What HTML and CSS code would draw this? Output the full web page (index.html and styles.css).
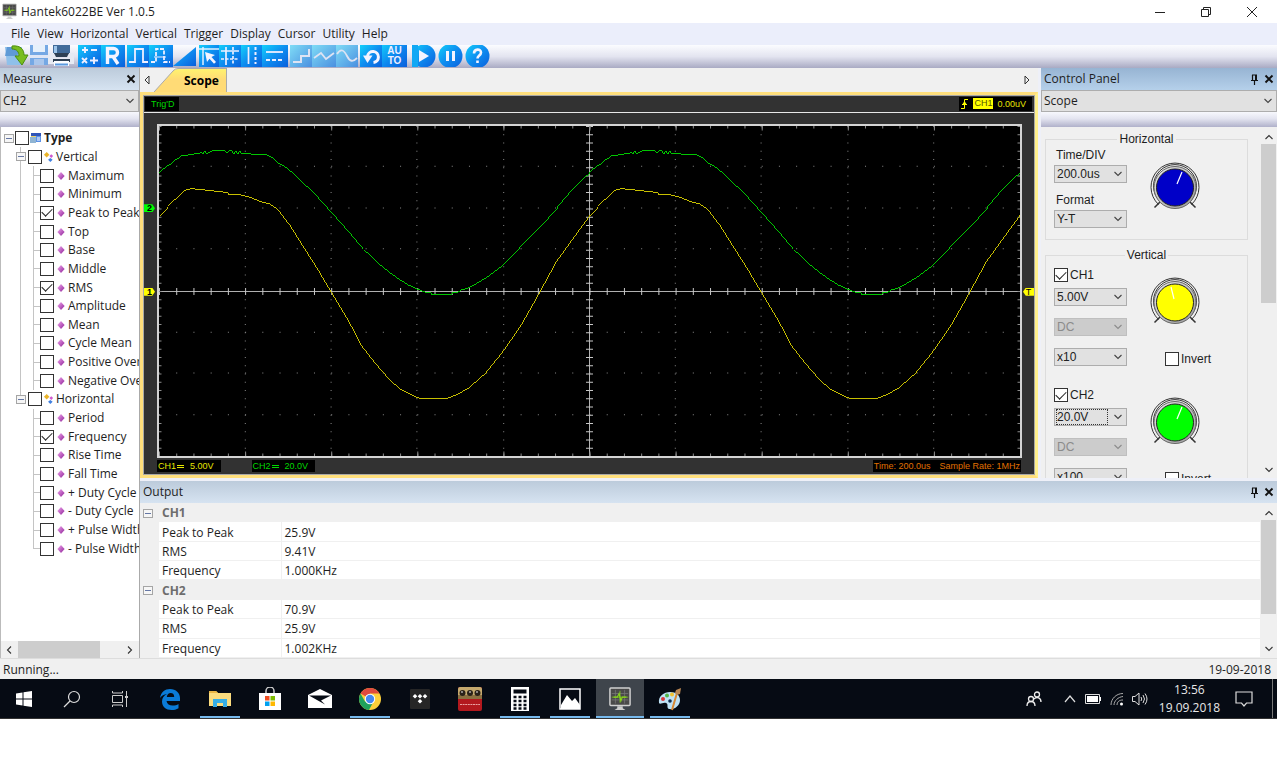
FILE: index.html
```html
<!DOCTYPE html>
<html lang="en">
<head>
<meta charset="utf-8">
<title>Hantek6022BE Ver 1.0.5</title>
<link rel="stylesheet" href="styles.css">
</head>
<body>
<svg class="defs" aria-hidden="true">
  <defs>
    <linearGradient id="blue" x1="0" y1="0" x2="1" y2="1"><stop offset="0" stop-color="#12d0fb"/><stop offset=".5" stop-color="#0e8df0"/><stop offset="1" stop-color="#0a5fdc"/></linearGradient>
    <linearGradient id="pale" x1="0" y1="0" x2="1" y2="1"><stop offset="0" stop-color="#7fdcf6"/><stop offset="1" stop-color="#4a8fe0"/></linearGradient>
    <linearGradient id="gem" x1="0" y1="0" x2="1" y2="1"><stop offset="0" stop-color="#f3a8f0"/><stop offset="1" stop-color="#8c1f96"/></linearGradient>
    <linearGradient id="ring" x1="0" y1="0" x2="1" y2="1"><stop offset="0" stop-color="#e8e8e8"/><stop offset="1" stop-color="#999"/></linearGradient>
    <symbol id="chev" viewBox="0 0 10 6"><path d="M1.500 1 5 4.500 8.500 1" fill="none" stroke="currentColor" stroke-width="1.100"/></symbol>
    <symbol id="dia" viewBox="0 0 8 8"><path d="M4 0 7.600 4 4 8 .4 4z" fill="url(#gem)"/></symbol>
    <symbol id="kids" viewBox="0 0 12 12"><path d="M4 .5 7 3.500 4 6.500 1 3.500z" fill="#e9b429"/><path d="M9 3l2 2-2 2-2-2z" fill="#d05ad0"/><path d="M8 7l2.500 2L8 11.500 5.500 9z" fill="#3f7fe0"/></symbol>
    <symbol id="pin" viewBox="0 0 9 11"><path d="M2 1h5M2.500 1v5M6 1v5M1 6.500h7M4.500 7v4" fill="none" stroke="#111" stroke-width="1.200"/><path d="M5 1h2v5H5z" fill="#111"/></symbol>
    <symbol id="cross" viewBox="0 0 10 10"><path d="M1.500 1.500 8.500 8.500M8.500 1.500 1.500 8.500" stroke="#111" stroke-width="1.900"/></symbol>
    <symbol id="scopeicon" viewBox="0 0 24 26"><rect x="1" y="1" width="22" height="19" rx="1" fill="#4a4a4a" stroke="#d0d0d0" stroke-width="1.600"/><path d="M3 7h18M3 14h18M7 3v15M17 3v15" stroke="#777" stroke-width=".8"/><path d="M3 11h18M12 4v13" stroke="#79b82a"/><path d="M5 11h4l2-4 2 8 1.500-4H19" fill="none" stroke="#88d819" stroke-width="1.200"/><path d="M9 21h6v2l3 2H6l3-2z" fill="#ccc"/></symbol>
    <symbol id="dial" viewBox="0 0 52 50"><g fill="none" stroke="#333"><path d="M9.500 42.500A24 24 0 1 1 42.500 42.500"/><path d="M10.500 39A21.500 21.500 0 1 1 41.500 39"/><path d="M5.500 45.500 11 40M46.500 45.500 41 40" stroke-width="1.500"/></g><circle cx="26" cy="25.500" r="21" fill="url(#ring)" stroke="#666"/><circle cx="26" cy="25.500" r="18.500" fill="currentColor" stroke="#222"/></symbol>
  </defs>
</svg>

<header class="titlebar">
  <svg class="appicon"><use href="#scopeicon"/></svg>
  <h1>Hantek6022BE Ver 1.0.5</h1>
  <div class="winbtns">
    <button aria-label="Minimize"><svg viewBox="0 0 12 12"><path d="M1 6.500h10" stroke="#222"/></svg></button>
    <button aria-label="Restore"><svg viewBox="0 0 12 12"><path d="M1.500 3.500h7v7h-7zM3.500 3.500v-2h7v7h-2" fill="none" stroke="#222"/></svg></button>
    <button aria-label="Close"><svg viewBox="0 0 12 12"><path d="M1 1 11 11M11 1 1 11" stroke="#222"/></svg></button>
  </div>
</header>

<nav class="menubar">
  <button>File</button><button>View</button><button>Horizontal</button><button>Vertical</button><button>Trigger</button><button>Display</button><button>Cursor</button><button>Utility</button><button>Help</button>
</nav>

<div class="toolbar" role="toolbar" aria-label="Tools">
  <div class="tools">
    <button aria-label="Open"><svg width="25" height="22"><path d="M0 2h17v18H2z" fill="#8fc0ea"/><path d="M2 2h14l-4 9H0z" fill="#5f9ad6"/><path d="M7 1c9-1 12 4 12 9h4l-6 10-7-9h4c0-4-2-7-7-7z" fill="#79bd1f" stroke="#4c8d10"/></svg></button>
    <button aria-label="Save"><svg width="18" height="22"><path d="M0 0h18v20H0z" fill="#75a8e4"/><path d="M3 0h12v7H3z" fill="#e6f0fb"/><path d="M0 10h18v3H0z" fill="#dfe6f5"/><path d="M4 14h10v6H4z" fill="#a9c6ec"/></svg></button>
    <button aria-label="Print"><svg width="28" height="22"><path d="M5 0h17v9H5z" fill="#416b9a"/><path d="M6 1h3v7H6z" fill="#9cc4ea"/><path d="M0 8h6l2 5h11l2-5h5v11H0z" fill="#e6eaf3"/><path d="M6 8h15l-2 4H8z" fill="#2e4054"/><path d="M5 14h17v3H5z" fill="#2e4054"/><path d="M6 16h15v5H6z" fill="#fafcff"/><path d="M7 19.500h13" stroke="#5b9be0" stroke-width="2"/></svg></button>
  </div>
  <div class="tools">
    <button aria-label="Math"><svg width="23" height="22"><rect width="23" height="22" fill="url(#blue)"/><path d="M4 5h6M7 2v6M13 5h6M4 13l5 5M9 13l-5 5M12 15.500h8M16 12v7" stroke="#eef" stroke-width="1.900"/></svg></button>
    <button aria-label="Reference"><svg width="24" height="22"><rect width="24" height="22" fill="url(#blue)"/><path d="M6.500 19V3.500h6a4 4 0 0 1 0 8h-6M12 11.500l5 7.500" fill="none" stroke="#f4f4ff" stroke-width="3.400"/></svg></button>
  </div>
  <div class="tools">
    <button aria-label="Single pulse"><svg width="22" height="22"><rect width="22" height="22" fill="url(#blue)"/><path d="M2 17h6V4h8v13h5" fill="none" stroke="#eef" stroke-width="1.800"/></svg></button>
    <button aria-label="Multi pulse"><svg width="24" height="22"><rect width="24" height="22" fill="url(#blue)"/><path d="M2 17h5V4h8v13h6" fill="none" stroke="#eef" stroke-width="1.800" stroke-dasharray="4 1.500"/><path d="M5 12h12" stroke="#eef"/></svg></button>
    <button aria-label="Ramp"><svg width="23" height="22"><path d="M0 21 23 2v19z" fill="url(#blue)"/></svg></button>
  </div>
  <div class="tools cursors">
    <button aria-label="Cursor"><svg width="20" height="22"><rect width="20" height="22" fill="url(#blue)"/><path d="M0 4h20M4 2v18" stroke="#dfefff" stroke-width="1.500"/><path d="M6 7l10 3-3.500 2 4.500 5-2 1.800-4.500-5L8 17z" fill="#f4f4ff"/></svg></button>
    <button aria-label="Cross cursor"><svg width="22" height="22"><rect width="22" height="22" fill="url(#blue)"/><path d="M7 2v18M2 6h18" stroke="#eef" stroke-width="1.700"/><path d="M14 2v18M2 14h18" stroke="#eef" stroke-width="1.700" stroke-dasharray="3 1.500"/></svg></button>
    <button aria-label="Vertical cursor"><svg width="21" height="22"><rect width="21" height="22" fill="url(#blue)"/><path d="M7.500 2v17" stroke="#eef" stroke-width="1.700"/><path d="M14.500 2v17" stroke="#eef" stroke-width="2" stroke-dasharray="3 2"/></svg></button>
    <button aria-label="Horizontal cursor"><svg width="26" height="22"><rect width="26" height="22" fill="url(#blue)"/><path d="M4 7h17" stroke="#eef" stroke-width="1.800"/><path d="M4 15h17" stroke="#eef" stroke-width="2" stroke-dasharray="4 2"/></svg></button>
  </div>
  <div class="tools">
    <button aria-label="Step"><svg width="22" height="22"><rect width="22" height="22" fill="url(#pale)"/><path d="M3 17h8v-6h8V4" fill="none" stroke="#dde3f3" stroke-width="2"/></svg></button>
    <button aria-label="Linear"><svg width="24" height="22"><rect width="24" height="22" fill="url(#pale)"/><path d="M2 13l7-5 5 6 8-6" fill="none" stroke="#dde3f3" stroke-width="1.800"/></svg></button>
    <button aria-label="Sine"><svg width="22" height="22"><rect width="22" height="22" fill="url(#pale)"/><path d="M1 9c4-6 7-4 10 2s6 6 10 2" fill="none" stroke="#dde3f3" stroke-width="1.800"/></svg></button>
  </div>
  <div class="tools">
    <button aria-label="Reset"><svg width="22" height="22"><rect width="22" height="22" fill="url(#blue)"/><path d="M7.500 11a5.500 5.500 0 1 1 6 6.500" fill="none" stroke="#f4f4ff" stroke-width="3"/><path d="M3 10.500h9.500L7.500 18z" fill="#f4f4ff"/></svg></button>
    <button class="auto"><span>AU</span><span>TO</span></button>
  </div>
  <div class="tools round">
    <button aria-label="Run"><svg width="25" height="22"><circle cx="13" cy="11" r="11.500" fill="url(#blue)"/><path d="M1 0h6v22H1z" fill="#10a8f5"/><path d="M8 5l10 6-10 6z" fill="#f4f4ff"/></svg></button>
    <button aria-label="Pause"><svg width="25" height="22"><circle cx="12.500" cy="11" r="12" fill="url(#blue)"/><path d="M9.500 6v10M15.500 6v10" stroke="#f4f4ff" stroke-width="3"/></svg></button>
    <button aria-label="Help"><svg width="25" height="22"><circle cx="12.500" cy="11" r="12" fill="url(#blue)"/><path d="M9 8.500c0-5 7-5 7-1 0 3-3.500 3-3.500 6M12.500 15.500V18" fill="none" stroke="#f4f4ff" stroke-width="2.600"/></svg></button>
  </div>
</div>

<main class="workspace">
  <aside class="measure">
    <div class="panehead"><h2>Measure</h2><button aria-label="Close"><svg width="10" height="10"><use href="#cross"/></svg></button></div>
    <label class="combo wide"><select aria-label="Channel"><option>CH2</option></select><svg width="10" height="6"><use href="#chev"/></svg></label>
    <div class="shade"></div>
    <div class="treebox">
      <div class="tree">
        <label class="root"><i class="exp"></i><input type="checkbox"><svg width="12" height="12"><path d="M1 2h10v8H1z" fill="#ecd36a"/><path d="M1 1h10v3H1z" fill="#2f55b8"/><path d="M6 4h5v6H6z" fill="#5d92e6"/><path d="M0 5h6v6H0z" fill="#8fb4d3"/><path d="M7 6h3M7 8h3" stroke="#fff"/></svg>Type</label>
        <label class="branch"><i class="exp"></i><input type="checkbox"><svg width="11" height="12"><use href="#kids"/></svg>Vertical</label>
        <label class="leaf"><input type="checkbox"><svg width="8" height="8"><use href="#dia"/></svg>Maximum</label>
        <label class="leaf"><input type="checkbox"><svg width="8" height="8"><use href="#dia"/></svg>Minimum</label>
        <label class="leaf"><input type="checkbox" checked><svg width="8" height="8"><use href="#dia"/></svg>Peak to Peak</label>
        <label class="leaf"><input type="checkbox"><svg width="8" height="8"><use href="#dia"/></svg>Top</label>
        <label class="leaf"><input type="checkbox"><svg width="8" height="8"><use href="#dia"/></svg>Base</label>
        <label class="leaf"><input type="checkbox"><svg width="8" height="8"><use href="#dia"/></svg>Middle</label>
        <label class="leaf"><input type="checkbox" checked><svg width="8" height="8"><use href="#dia"/></svg>RMS</label>
        <label class="leaf"><input type="checkbox"><svg width="8" height="8"><use href="#dia"/></svg>Amplitude</label>
        <label class="leaf"><input type="checkbox"><svg width="8" height="8"><use href="#dia"/></svg>Mean</label>
        <label class="leaf"><input type="checkbox"><svg width="8" height="8"><use href="#dia"/></svg>Cycle Mean</label>
        <label class="leaf"><input type="checkbox"><svg width="8" height="8"><use href="#dia"/></svg>Positive Overshoot</label>
        <label class="leaf"><input type="checkbox"><svg width="8" height="8"><use href="#dia"/></svg>Negative Overshoot</label>
        <label class="branch"><i class="exp"></i><input type="checkbox"><svg width="11" height="12"><use href="#kids"/></svg>Horizontal</label>
        <label class="leaf last"><input type="checkbox"><svg width="8" height="8"><use href="#dia"/></svg>Period</label>
        <label class="leaf last"><input type="checkbox" checked><svg width="8" height="8"><use href="#dia"/></svg>Frequency</label>
        <label class="leaf last"><input type="checkbox"><svg width="8" height="8"><use href="#dia"/></svg>Rise Time</label>
        <label class="leaf last"><input type="checkbox"><svg width="8" height="8"><use href="#dia"/></svg>Fall Time</label>
        <label class="leaf last"><input type="checkbox"><svg width="8" height="8"><use href="#dia"/></svg>+ Duty Cycle</label>
        <label class="leaf last"><input type="checkbox"><svg width="8" height="8"><use href="#dia"/></svg>- Duty Cycle</label>
        <label class="leaf last"><input type="checkbox"><svg width="8" height="8"><use href="#dia"/></svg>+ Pulse Width</label>
        <label class="leaf last"><input type="checkbox"><svg width="8" height="8"><use href="#dia"/></svg>- Pulse Width</label>
      </div>
      <div class="hbar"><svg class="prev" width="10" height="6"><use href="#chev"/></svg><span></span><svg class="fwd" width="10" height="6"><use href="#chev"/></svg></div>
    </div>
  </aside>

  <div class="content">
    <div class="upper">
      <section class="scope">
        <div class="tabs">
          <button class="arrow" aria-label="Previous tab"><svg width="6" height="10"><path d="M5 1v8L1 5z" fill="none" stroke="#333"/></svg></button>
          <button class="tab"><svg width="30" height="24"><defs><linearGradient id="tabfill" x2="0" y2="1"><stop offset="0" stop-color="#fff36e"/><stop offset=".45" stop-color="#ffdb76"/></linearGradient></defs><path d="M0 24 19 3Q21 1 24 1h6v23z" fill="url(#tabfill)"/><path d="M0 24 19 3Q21 .5 24 .5h6" fill="none" stroke="#aaa"/></svg><span>Scope</span></button>
          <button class="arrow next" aria-label="Next tab"><svg width="6" height="10"><path d="M1 1v8l4-4z" fill="none" stroke="#333"/></svg></button>
        </div>
        <div class="screen">
          <div class="status">
            <span class="tag green trig">Trig'D</span>
            <span class="tag yellow level"><svg width="8" height="12"><path d="M0 10.500h3.500v-9H7M1 6.500h5" fill="none" stroke="#ffff00"/><path d="M3.500 3 6 7H1z" fill="#ff0"/></svg><b>CH1</b> 0.00uV</span>
          </div>
          <div class="stage">
            <div class="marks"><span class="mark two">2</span><span class="mark one">1</span></div>
            <div class="plot">
              <svg viewBox="158 126 863 332" preserveAspectRatio="none" aria-label="Waveforms">
                <defs>
                  <path id="gridv" d="M244.500 126V458M330.500 126V458M416.500 126V458M503.500 126V458M675.500 126V458M761.500 126V458M848.500 126V458M934.500 126V458"/>
                  <path id="gridh" d="M158 166.500H1021M158 208.500H1021M158 249.500H1021M158 333.500H1021M158 374.500H1021M158 416.500H1021"/>
                  <path id="green" d="M158 173L165 167 169 165 174 160 178 158 180 156H187V155H192L193 154H198L200 152 202 154 204 151 206 154 209 152 211 151H224L226 153 228 151H231L233 154 235 151 237 154 239 151 241 154H249L255 155H266L272 158 277 163 283 166 292 173 300 181 313 193 330 212 347 231 363 250 380 266 390 274 400 281 408 286 417 290 422 292 427 294H431V295.500H452V293.500H457L461 291 468 289 477 284 487 278 503 266 512 257 520 248 530 238 540 227 557 208 573 189 590 173"/>
                  <path id="yellow" d="M158 217L167 207 172 202 177 197 183 191 190 189 200 190 210 191 227 193 228 195H238L247 197 255 200 262 203 268 204 273 207 277 210 290 227 303 248 317 270 330 292 348 322 361 347 371 360 381 372 390 382 400 391 410 396 420 400.500H446L457 396 468 390 485 375 502 354 520 328 536 300 556 263 571 242 590 216"/>
                </defs>
                <g stroke="#8c8c8c" fill="none">
                  <use href="#gridv" stroke-dasharray="1 7.300"/>
                  <use href="#gridh" stroke-dasharray="1 16.260"/>
                  <path d="M589.500 126V458M158 292.500H1021" stroke="#b4b4b4"/>
                  <path d="M158 292.500H1021" stroke-width="7" stroke-dasharray="1 16.260" stroke="#c8c8c8"/>
                  <path d="M589.500 126V458" stroke-width="7" stroke-dasharray="1 7.300" stroke="#c8c8c8"/>
                  <path d="M158 127H1021M158 457H1021" stroke-width="3" stroke-dasharray="1 16.260"/>
                  <path d="M158.500 126V458M1020.500 126V458" stroke-width="4" stroke-dasharray="1 7.300"/>
                  <path d="M158 128H1021M158 456H1021" stroke-width="5" stroke-dasharray="1 85.300"/>
                </g>
                <g fill="none" stroke-width="1" shape-rendering="crispEdges">
                  <g stroke="#00c800"><use href="#green"/><use href="#green" x="431"/></g>
                  <g stroke="#c8c000"><use href="#yellow"/><use href="#yellow" x="431"/></g>
                </g>
              </svg>
            </div>
            <div class="marks"><span class="mark trg">T</span></div>
          </div>
          <div class="status foot">
            <span class="tag yellow">CH1<i></i>5.00V</span>
            <span class="tag green second">CH2<i></i>20.0V</span>
            <span class="tag orange">Time: 200.0us<em>Sample Rate: 1MHz</em></span>
          </div>
        </div>
      </section>

      <section class="control">
        <div class="panehead active"><h2>Control Panel</h2><button aria-label="Pin"><svg width="9" height="11"><use href="#pin"/></svg></button><button aria-label="Close"><svg width="10" height="10"><use href="#cross"/></svg></button></div>
        <label class="combo wide"><select aria-label="Panel"><option>Scope</option></select><svg width="10" height="6"><use href="#chev"/></svg></label>
        <div class="shade"></div>
        <div class="scrollarea">
          <div class="groups">
            <fieldset>
              <legend>Horizontal</legend>
              <div class="horiz">
                <div>
                  <label for="tdiv">Time/DIV</label>
                  <span class="combo"><select id="tdiv"><option>200.0us</option></select><svg width="10" height="6"><use href="#chev"/></svg></span>
                  <label for="fmt">Format</label>
                  <span class="combo"><select id="fmt"><option>Y-T</option></select><svg width="10" height="6"><use href="#chev"/></svg></span>
                </div>
                <svg class="dial" color="#0000c8" viewBox="0 0 52 50"><use href="#dial"/><path d="M28 22 33 10" stroke="#fff" stroke-width="1.200"/></svg>
              </div>
            </fieldset>
            <fieldset class="vert">
              <legend>Vertical</legend>
              <div class="channel">
                <div>
                  <label class="tick"><input type="checkbox" checked>CH1</label>
                  <span class="combo"><select aria-label="CH1 volts"><option>5.00V</option></select><svg width="10" height="6"><use href="#chev"/></svg></span>
                  <span class="combo off"><select aria-label="CH1 coupling" disabled><option>DC</option></select><svg width="10" height="6"><use href="#chev"/></svg></span>
                  <span class="combo"><select aria-label="CH1 probe"><option>x10</option></select><svg width="10" height="6"><use href="#chev"/></svg></span>
                </div>
                <div class="side"><svg class="dial" color="#ffff00" viewBox="0 0 52 50"><use href="#dial"/><path d="M25 22 22 10" stroke="#fff" stroke-width="1.200"/></svg><label class="tick"><input type="checkbox">Invert</label></div>
              </div>
              <div class="channel">
                <div>
                  <label class="tick"><input type="checkbox" checked>CH2</label>
                  <span class="combo focus"><select aria-label="CH2 volts"><option>20.0V</option></select><svg width="10" height="6"><use href="#chev"/></svg></span>
                  <span class="combo off"><select aria-label="CH2 coupling" disabled><option>DC</option></select><svg width="10" height="6"><use href="#chev"/></svg></span>
                  <span class="combo"><select aria-label="CH2 probe"><option>x100</option></select><svg width="10" height="6"><use href="#chev"/></svg></span>
                </div>
                <div class="side"><svg class="dial" color="#00ff00" viewBox="0 0 52 50"><use href="#dial"/><path d="M28 22 33 10" stroke="#fff" stroke-width="1.200"/></svg><label class="tick"><input type="checkbox">Invert</label></div>
              </div>
            </fieldset>
          </div>
          <div class="vbar"><svg class="up" width="10" height="6"><use href="#chev"/></svg><span></span><svg width="10" height="6"><use href="#chev"/></svg></div>
        </div>
      </section>
    </div>

    <section class="output">
      <div class="panehead"><h2>Output</h2><button aria-label="Pin"><svg width="9" height="11"><use href="#pin"/></svg></button><button aria-label="Close"><svg width="10" height="10"><use href="#cross"/></svg></button></div>
      <div class="results">
        <table>
          <tbody>
            <tr class="group"><td class="gutter"><i class="exp"></i></td><th colspan="2">CH1</th></tr>
            <tr><td class="gutter"></td><td>Peak to Peak</td><td>25.9V</td></tr>
            <tr><td class="gutter"></td><td>RMS</td><td>9.41V</td></tr>
            <tr><td class="gutter"></td><td>Frequency</td><td>1.000KHz</td></tr>
            <tr class="group"><td class="gutter"><i class="exp"></i></td><th colspan="2">CH2</th></tr>
            <tr><td class="gutter"></td><td>Peak to Peak</td><td>70.9V</td></tr>
            <tr><td class="gutter"></td><td>RMS</td><td>25.9V</td></tr>
            <tr><td class="gutter"></td><td>Frequency</td><td>1.002KHz</td></tr>
          </tbody>
        </table>
        <div class="vbar short"><svg class="up" width="10" height="6"><use href="#chev"/></svg><span></span><svg width="10" height="6"><use href="#chev"/></svg></div>
      </div>
    </section>
  </div>
</main>

<div class="statusbar"><span>Running...</span><span>19-09-2018</span></div>

<footer class="taskbar">
  <div class="system">
    <button aria-label="Start"><svg width="18" height="18"><path d="M1 3.500 7.500 2.500V8.500H1zM8.500 2.300 17 1v7.500H8.500zM1 9.500H7.500v6L1 14.500zM8.500 9.500H17V17l-8.500-1.300z" fill="#fff"/></svg></button>
    <button aria-label="Search"><svg width="18" height="18"><circle cx="11" cy="7" r="5.500" fill="none" stroke="#ddd" stroke-width="1.200"/><path d="M7 11 1 17" stroke="#ddd" stroke-width="1.200"/></svg></button>
    <button aria-label="Task view"><svg width="18" height="18"><path d="M1.500 5.500h10v7h-10zM1.500 1v2h10V1M1.500 17v-2h10v2M15.500 1v16" fill="none" stroke="#ccc"/><path d="M14 6h3v2h-3z" fill="#ccc"/></svg></button>
  </div>
  <div class="apps">
    <button aria-label="Edge"><svg width="22" height="22" viewBox="0 0 22 22"><path d="M1 10C2 4 6 1 11 1c6 0 10 4 10 9v3H7.500c.5 3 3 4.500 6 4.500 2.500 0 4.500-.6 6-1.600v4.300C17.500 21.500 15 22 12.500 22 7 22 3 18.500 3 13.500 3 10 5 7.500 8 6 5 6.300 2.500 8 1 10zm6.800-1h7.400c0-2.500-1.200-4-3.600-4-2 0-3.400 1.600-3.800 4z" fill="#0a7bd8"/></svg></button>
    <button class="open" aria-label="File Explorer"><svg width="24" height="22"><path d="M1 3h7l2 2h13v13H1z" fill="#fbdc7e"/><path d="M1 3h7l2 2H1z" fill="#e9b544"/><path d="M5 11h14v8h-4v-4H9v4H5z" fill="#36aee6"/></svg></button>
    <button aria-label="Store"><svg width="24" height="24"><path d="M8 7V4a4 4 0 0 1 8 0v3" fill="none" stroke="#ccc" stroke-width="1.500"/><path d="M1 6h22v17H1z" fill="#fff"/><path d="M7 9h4.500v4.500H7z" fill="#f04d22"/><path d="M12.500 9H17v4.500h-4.500z" fill="#7dba00"/><path d="M7 14.500h4.500V19H7z" fill="#00a0f0"/><path d="M12.500 14.500H17V19h-4.500z" fill="#ffb800"/></svg></button>
    <button aria-label="Mail"><svg width="24" height="22"><path d="M0 7 12 1l12 6v13H0z" fill="#fff"/><path d="M1 7.500h22L13 12.500l4 4z" fill="#060b14"/></svg></button>
    <button class="open" aria-label="Chrome"><svg width="22" height="22" viewBox="0 0 22 22"><circle cx="11" cy="11" r="11" fill="#fdd03b"/><path d="M11 11 1.500 5.500A11 11 0 0 1 20.500 5.500H11z" fill="#e04a3f"/><path d="M1.500 5.500A11 11 0 0 0 10 22l4.500-8.500H6z" fill="#1fa15d"/><circle cx="11" cy="11" r="5.200" fill="#fff"/><circle cx="11" cy="11" r="4.200" fill="#4688f1"/></svg></button>
    <button aria-label="Tidal"><svg width="20" height="20"><rect width="20" height="20" rx="1" fill="#262626"/><path d="M5 5l2.300 2.300L5 9.600 2.700 7.300zM10 5l2.300 2.300L10 9.600 7.700 7.300zM15 5l2.300 2.300L15 9.600l-2.300-2.300zM10 10l2.300 2.300L10 14.600l-2.300-2.300z" fill="#fff"/></svg></button>
    <button aria-label="Amp modeller"><svg width="24" height="24"><rect width="24" height="24" rx="2" fill="#b3191e"/><path d="M0 2q0-2 2-2h20q2 0 2 2v9H0z" fill="#c4a96e"/><path d="M0 8h24v4H0z" fill="#8b7041"/><g fill="#2a2118"><circle cx="4.500" cy="6" r="3"/><circle cx="12" cy="6" r="3"/><circle cx="19.500" cy="6" r="3"/></g><path d="M2 17.500h20" stroke="#e9a0a0" stroke-dasharray="2 .6"/><path d="M3 5h2M11 5h2M18 5h2" stroke="#eee"/></svg></button>
    <button class="open" aria-label="Calculator"><svg width="18" height="24"><path d="M0 0h18v24H0z" fill="#fff"/><path d="M2.500 2.500h13v4h-13z" fill="#060b14"/><path d="M2.500 10h13M2.500 14h13M2.500 18h13M2.500 21.500h13" stroke="#060b14" stroke-width="2.300" stroke-dasharray="3 2"/></svg></button>
    <button class="open" aria-label="Photos"><svg width="22" height="22"><path d="M1 1h20v20H1z" fill="#060b14" stroke="#fff" stroke-width="1.500"/><path d="M2 17 8 7l5 6 3-3 5 7v4H2z" fill="#fff"/></svg></button>
    <button class="open current" aria-label="Hantek6022BE"><svg width="22" height="24"><use href="#scopeicon"/></svg></button>
    <button class="open" aria-label="Paint"><svg width="24" height="24"><path d="M1 16C0 9 6 5 12 5c6 0 10 3 10 8 0 6-6 10-11 9-3-1 0-5-3-6-3-1-6 2-7 0z" fill="#bfe2f5"/><circle cx="5" cy="12" r="2" fill="#d9383a"/><circle cx="9" cy="8.500" r="2" fill="#53b648"/><circle cx="14" cy="7.500" r="2" fill="#f2c230"/><circle cx="12" cy="14" r="1.800" fill="#0b2b50"/><path d="M14 23 19 6" stroke="#d98a35" stroke-width="2"/><path d="M17 6l1-3 5-2-1 6-3 1z" fill="#b98652"/></svg></button>
  </div>
  <div class="tray">
    <svg width="16" height="16"><g fill="none" stroke="#eee" stroke-width="1.300"><circle cx="11" cy="3.500" r="2.500"/><circle cx="5" cy="8" r="2.500"/><path d="M1 15c0-6 8-6 8 0M8 8c3-3 7-1 7 3"/></g></svg>
    <svg width="12" height="12"><path d="M1 9 6 3l5 6" fill="none" stroke="#ddd" stroke-width="1.200"/></svg>
    <svg width="16" height="12"><path d="M.5 1.500h14v9H.5z" fill="none" stroke="#ddd"/><path d="M2 3h11v6H2zM15 4h1v4h-1z" fill="#fff"/></svg>
    <svg width="13" height="14"><g fill="none" stroke="#aaa"><path d="M1 13C1 7 6 1.500 13 1.500M4 13c0-4 4-8 9-8.500M7 13c0-3 2-5 6-5"/></g><circle cx="11.500" cy="12" r="1.500" fill="#fff"/></svg>
    <svg width="16" height="14"><g fill="none" stroke="#ddd"><path d="M.5 4.500H3L7 1v12L3 9.500H.5zM9 5q1.500 2 0 4M11 3q3 4 0 8M13 1.500q4 5.500 0 11"/></g></svg>
    <div class="clock"><span>13:56</span><span>19.09.2018</span></div>
    <svg width="18" height="18"><path d="M1 2h16v11h-5.500L9 16 6.500 13H1z" fill="none" stroke="#ddd" stroke-width="1.200"/></svg>
    <i class="desk"></i>
  </div>
</footer>
</body>
</html>
```

FILE: styles.css
```css
* { box-sizing: border-box; }

body {
  margin: 0;
  height: 100vh;
  padding-bottom: 49px;
  display: flex;
  flex-direction: column;
  background: #fff;
  color: #1e1e1e;
  font: 12px/16px "Open Sans", "Noto Sans", sans-serif;
}

button, select, input { font: inherit; color: inherit; }
button { border: 0; padding: 0; background: none; }
svg { display: block; flex: none; }
h1, h2 { margin: 0; font: inherit; }
.defs { position: absolute; width: 0; height: 0; }

/* Title, menu and tool bars */
.titlebar { display: flex; align-items: center; height: 23px; padding-left: 2px; }
.appicon { width: 15px; height: 17px; }
.titlebar h1 { flex: 1; padding-left: 4px; }
.winbtns { display: flex; padding-right: 2px; }
.winbtns button { width: 46px; display: flex; justify-content: center; }
.winbtns svg { width: 12px; height: 12px; }

.menubar { display: flex; gap: 7px; height: 22px; padding-left: 11px; background: #ebeefb; }

.toolbar {
  display: flex;
  gap: 2px;
  height: 23px;
  padding-left: 5px;
  background: linear-gradient(#fbfcff, #e3e4f0 50%, #a9aac3);
}
.tools { display: flex; align-items: flex-start; }
.cursors { padding-left: 1px; }
.round { gap: 2px; padding-left: 2px; }
.auto {
  display: flex;
  flex-direction: column;
  justify-content: center;
  width: 25px;
  height: 22px;
  background: linear-gradient(135deg, #12c8fb, #0e85ee 50%, #0a5fdc);
  color: #eef;
  font: bold 10px/10px "Liberation Sans", Arial, sans-serif;
}
.auto span { display: block; height: 10px; overflow: hidden; }

/* Panels */
.workspace { flex: 1; min-height: 0; display: flex; background: #eef0f8; }
.measure { width: 140px; display: flex; flex-direction: column; border-right: 1px solid #aaa; background: #fff; }
.content { flex: 1; min-width: 0; display: flex; flex-direction: column; gap: 3px; }
.panehead {
  flex: none;
  display: flex;
  align-items: center;
  gap: 5px;
  height: 22px;
  padding: 0 3px;
  background: linear-gradient(#bccbdb, #d6e3f1);
}
.panehead h2 { flex: 1; }
.panehead.active { background: linear-gradient(#97b4d3, #b5d0ea); }
.shade { flex: none; height: 15px; background: linear-gradient(#f7f8fd, #e3e4f0 45%, #b0b1ca); }

.combo { display: grid; align-items: center; width: 73px; height: 18px; font: 12px/16px "Liberation Sans", Arial, sans-serif; color: #222; }
.combo > *, .combo::after { grid-area: 1 / 1; }
.combo > svg { justify-self: end; margin-right: 4px; color: #444; pointer-events: none; }
.combo select {
  appearance: none;
  width: 100%;
  height: 100%;
  padding: 0 2px;
  border: 1px solid #adadad;
  border-radius: 0;
  background: #e1e1e1;
  opacity: 1;
}
.combo.off, .combo.off > svg { color: #8b8b8b; }
.combo.off select { background: #ccc; border-color: #bfbfbf; }
.combo.focus::after { content: ""; height: 14px; margin: 0 19px 0 2px; border: 1px dotted #333; pointer-events: none; }
.combo.wide { flex: none; width: 100%; height: 22px; font: inherit; color: inherit; }

input[type="checkbox"] {
  appearance: none;
  flex: none;
  width: 14px;
  height: 14px;
  margin: 0;
  border: 1px solid #333;
  background: #fff;
  display: grid;
  place-items: center;
}
input[type="checkbox"]:checked::after {
  content: "";
  width: 9px;
  height: 5px;
  margin-bottom: 3px;
  border: solid #222;
  border-width: 0 0 1px 1px;
  transform: rotate(-45deg);
}

/* Measurement tree */
.treebox { flex: 1; min-height: 0; display: flex; flex-direction: column; justify-content: space-between; border-left: 1px solid #bbb; overflow: hidden; }
.tree {
  display: grid;
  grid-auto-rows: 1fr;
  height: 429px;
  margin-top: 2px;
  padding-left: 3px;
  overflow: hidden;
  background: linear-gradient(#c4c4c4, #c4c4c4) 19px 18px / 1px 252px no-repeat;
}
.tree label { display: flex; align-items: center; white-space: nowrap; }
.root { gap: 1px; font-weight: bold; }
.root svg { margin-right: 1px; }
.branch { padding-left: 12px; }
.branch .exp { margin-right: 2px; }
.branch svg { margin: 0 2px 0 1px; }
.leaf { padding-left: 29px; }
.leaf::before {
  content: "";
  width: 7px;
  align-self: stretch;
  background:
    linear-gradient(#c4c4c4, #c4c4c4) 0 50% / 7px 1px no-repeat,
    linear-gradient(#c4c4c4, #c4c4c4) 0 0 / 1px 100% no-repeat;
}
.leaf:last-child::before { background-size: 7px 1px, 1px 50%; }
.leaf svg { margin: 0 3px; }
.exp { flex: none; display: block; width: 10px; height: 9px; border: 1px solid #a5a5a5; background: linear-gradient(#6577a5, #6577a5) center / 6px 1px no-repeat #f6f6f6; }

.hbar { display: flex; align-items: center; height: 17px; padding: 0 4px 0 3px; background: #f0f0f0; color: #333; }
.hbar span { width: 82px; height: 17px; margin: 0 auto 0 4px; background: #cdcdcd; }
.prev { transform: rotate(90deg); }
.fwd { transform: rotate(-90deg); }
.up { transform: rotate(180deg); }

.vbar { flex: none; display: flex; flex-direction: column; align-items: center; gap: 4px; width: 17px; padding: 7px 0 5px; background: #f0f0f0; color: #333; }
.vbar span { width: 15px; height: 159px; margin-bottom: auto; background: #cdcdcd; }
.vbar.short { padding: 7px 0 6px; }
.vbar.short span { height: 94px; }

/* Oscilloscope */
.upper { flex: 1; min-height: 0; display: flex; gap: 3px; }
.scope { flex: 1; min-width: 0; display: flex; flex-direction: column; }
.tabs { flex: none; display: flex; align-items: center; height: 24px; background: #f0f0f0; }
.arrow { width: 14px; padding-left: 4px; }
.next { margin-left: auto; width: 14px; padding: 0; }
.tab { display: flex; height: 24px; font-weight: bold; color: #000; }
.tab span { padding: 4px 7px 0 0; border-top: 1px solid #aaa; border-right: 1px solid #aaa; background: linear-gradient(#fff36e, #ffdb76 45%); }
.screen {
  flex: 1;
  min-height: 0;
  display: flex;
  flex-direction: column;
  padding: 0 1px 1px;
  border: 3px solid #ffdf7c;
  border-right-color: #fff08c;
  background: #323232;
  font: 9px/12px "Liberation Sans", Arial, sans-serif;
  outline: 1px solid #a8a8a8;
  outline-offset: -4px;
}
.status { flex: none; display: flex; align-items: center; height: 18px; border-bottom: 1px solid #e8e8e8; }
.tag { display: flex; align-items: center; gap: 4px; height: 14px; padding: 0 7px; background: #000; white-space: nowrap; }
.trig { padding: 0 5px 0 6px; margin-left: 1px; }
.level { margin-left: auto; padding: 0 6px 0 2px; margin-right: 2px; }
.level b { padding: 0 1px; background: #ff0; color: #555500; font-weight: normal; line-height: 11px; }
.green { color: #00d800; }
.yellow { color: #e6e600; }
.orange { color: #e07000; }
.stage { flex: 1; min-height: 0; display: flex; padding-top: 11px; }
.marks { position: relative; width: 13px; }
.marks:last-child { width: 12px; }
.plot { flex: 1; min-width: 0; min-height: 0; border: 2px solid #d4d4d4; background: #000; }
.plot svg { width: 100%; height: 100%; }
.mark { position: absolute; left: 0; width: 11px; height: 8px; color: #000; background: #ff0; font: bold 9px/8px "Liberation Sans", Arial, sans-serif; text-align: center; clip-path: polygon(0 0, 75% 0, 100% 50%, 75% 100%, 0 100%); }
.two { top: 24%; background: #0f0; }
.one { top: 49%; }
.trg { top: 49%; left: 1px; font-weight: normal; clip-path: polygon(25% 0, 100% 0, 100% 100%, 25% 100%, 0 50%); }
.foot { height: 16px; padding: 0 13px; border: 0; }
.foot .tag { height: 12px; padding: 0 7px 0 1px; }
.foot .second { margin-left: 31px; }
.foot .orange { margin-left: auto; padding: 0 1px; gap: 9px; }
.foot em { font-style: normal; }
.foot i { width: 7px; height: 3px; margin: 1px 2px 0 -3px; border: solid currentColor; border-width: 1px 0; }

/* Control panel */
.control { flex: none; width: 236px; display: flex; flex-direction: column; background: #f0f0f0; }
.scrollarea { flex: 1; min-height: 0; display: flex; overflow: hidden; }
.groups { flex: 1; min-width: 0; padding: 5px 12px 0 4px; font: 12px/14px "Liberation Sans", Arial, sans-serif; }
fieldset { min-width: 0; margin: 0 0 8px; padding: 0 8px 11px; border: 1px solid #dcdcdc; }
legend { margin: 0 auto; padding: 0 2px; line-height: 14px; }
.horiz { display: grid; grid-template-columns: 73px 1fr; align-items: center; padding-top: 2px; }
.horiz .combo { margin: 3px 0 10px; }
.horiz > div > :last-child { margin-bottom: 0; }
.horiz label { display: block; padding-left: 2px; }
.dial { width: 52px; height: 50px; }
.horiz .dial { margin: 0 0 2px 22px; }
.vert { padding-top: 6px; }
.channel { display: grid; grid-template-columns: 73px 1fr; height: 120px; }
.tick { display: flex; align-items: center; gap: 2px; height: 14px; }
.channel .combo { margin: 6px 0 12px; }
.channel .combo + .combo { margin: 0 0 12px; }
.side { padding: 9px 0 0 22px; }
.side .tick { margin: 25px 0 0 16px; }

/* Output table */
.output { flex: none; }
.results { display: flex; height: 155px; background: #fff; }
table { flex: 1; height: 155px; border-collapse: collapse; table-layout: fixed; line-height: 14px; }
td, th { padding: 2px 3px 0; text-align: left; border-bottom: 1px solid #f0f0f0; }
.gutter { width: 19px; background: #f0f0f0; }
td:nth-child(2) { width: 122px; border-right: 1px solid #f0f0f0; }
.group th { background: #f0f0f0; color: #6d6d6d; }

.statusbar { flex: none; display: flex; justify-content: space-between; align-items: center; height: 21px; padding: 2px 6px 0 3px; background: #f0f0f0; border-top: 1px solid #ddd; }

/* Task bar */
.taskbar { flex: none; display: flex; height: 40px; background: #060b14; border-bottom: 1px solid #333; }
.taskbar button { display: grid; place-items: center; height: 39px; }
.system { display: flex; }
.system button { width: 48px; }
.apps { display: flex; gap: 2px; padding-left: 2px; }
.apps button { width: 48px; }
.apps .open { background: linear-gradient(#76b9ed, #76b9ed) center bottom / 40px 2px no-repeat; }
.apps .current { background: linear-gradient(#76b9ed, #76b9ed) center bottom / 48px 2px no-repeat #3f454c; }
.tray { display: flex; align-items: center; margin-left: auto; gap: 9px; color: #e8e8e8; }
.tray svg:first-child { margin-right: 13px; }
.clock { display: flex; flex-direction: column; align-items: center; line-height: 18px; padding: 0 6px 0 2px; }
.desk { align-self: stretch; width: 5px; margin-left: 10px; border-left: 1px solid #777; }
```
